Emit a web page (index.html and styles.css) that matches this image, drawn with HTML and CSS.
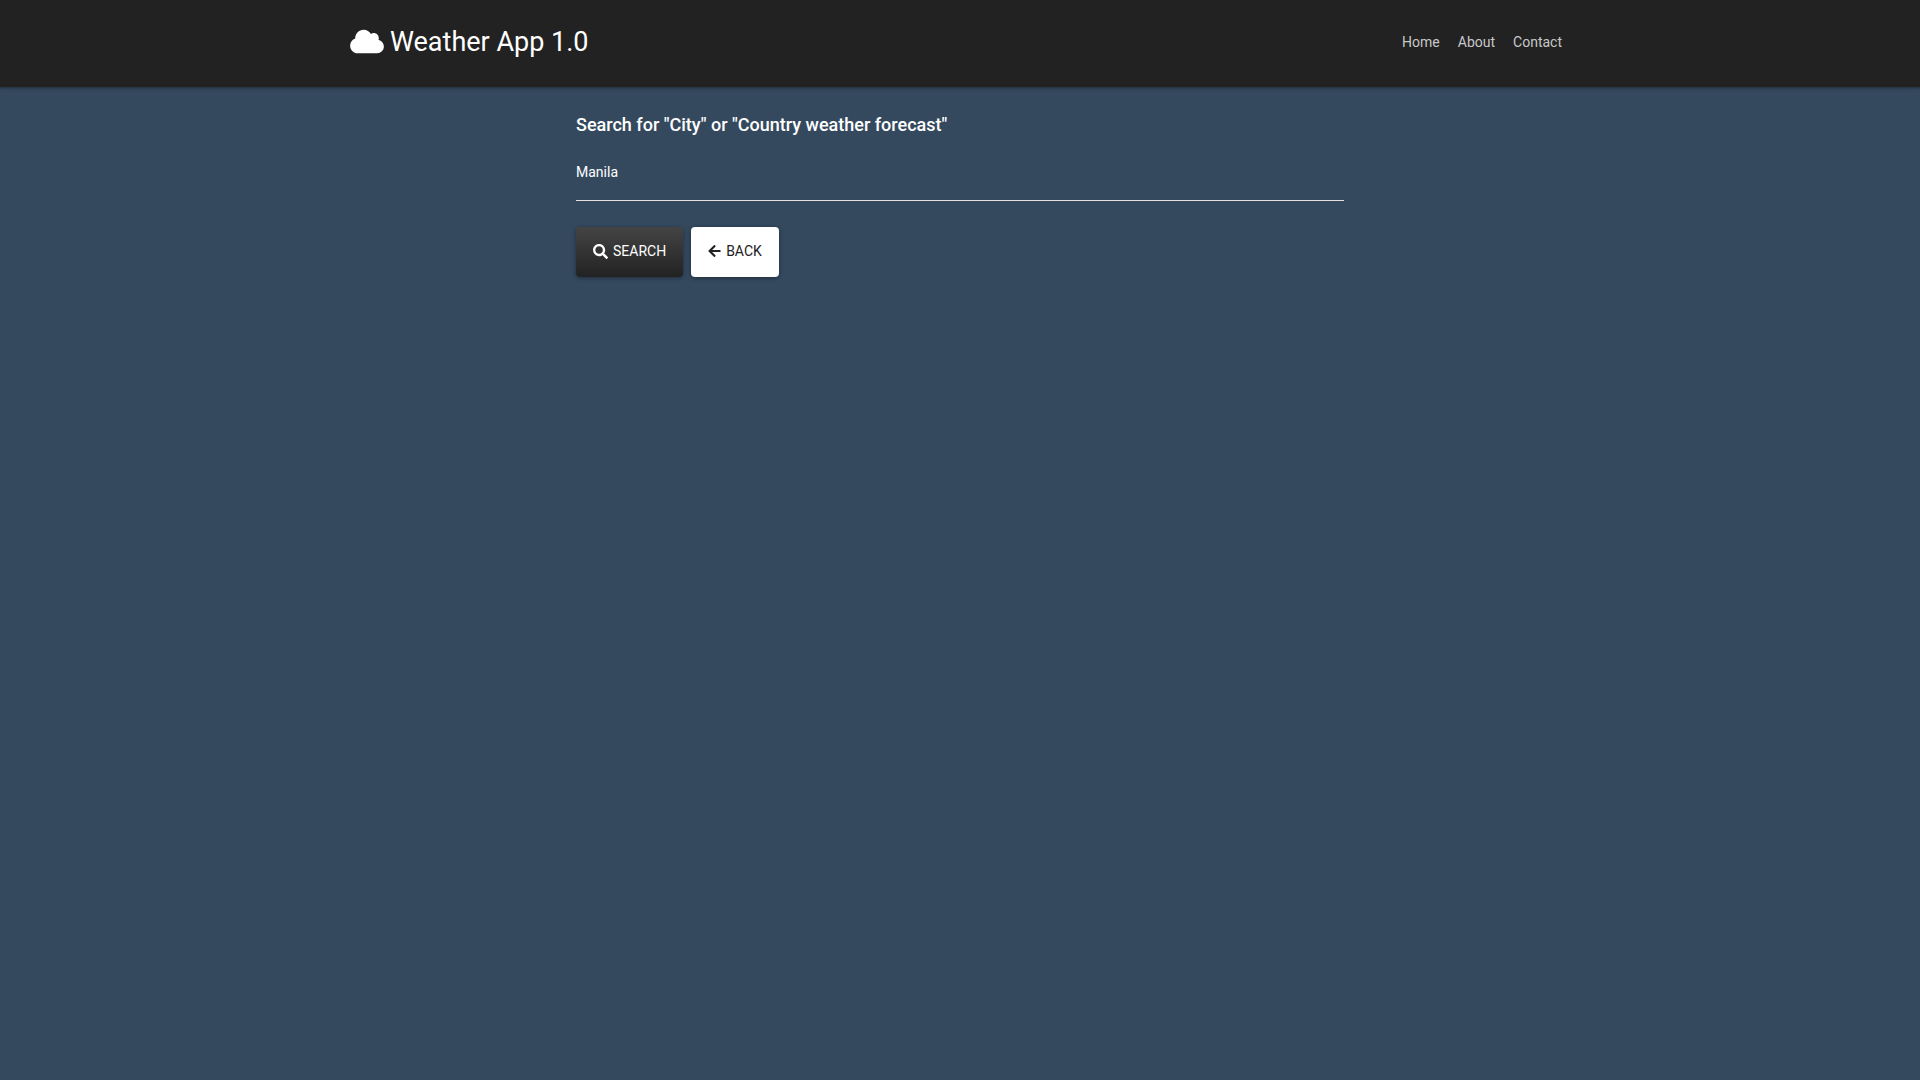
FILE: index.html
```html
<!DOCTYPE html>
<html lang="en">
<head>
<meta charset="utf-8">
<meta name="viewport" content="width=device-width, initial-scale=1">
<title>Weather App 1.0</title>
<link rel="stylesheet" href="styles.css">
</head>
<body>
<header class="navbar">
  <div class="navbar-inner">
    <a class="brand" href="#">
      <svg class="icon-cloud" viewBox="0 0 640 512" aria-hidden="true"><path d="M537.6 226.6c4.1-10.7 6.4-22.4 6.4-34.6 0-53-43-96-96-96-19.7 0-38.1 6-53.3 16.2C367 64.2 315.3 32 256 32c-88.4 0-160 71.6-160 160 0 2.7.1 5.4.2 8.1C40.2 219.8 0 273.2 0 336c0 79.5 64.5 144 144 144h368c70.7 0 128-57.3 128-128 0-61.9-44-113.6-102.4-125.4z"/></svg>
      <span>Weather App 1.0</span>
    </a>
    <nav class="nav">
      <a class="nav-link" href="#">Home</a>
      <a class="nav-link" href="#">About</a>
      <a class="nav-link" href="#">Contact</a>
    </nav>
  </div>
</header>
<main class="content">
  <form class="search-form">
    <label class="search-label" for="city">Search for "City" or "Country weather forecast"</label>
    <input class="search-input" id="city" type="text" value="Manila">
    <div class="actions">
      <button class="btn btn-dark" type="button">
        <svg class="icon-search" viewBox="0 0 512 512" aria-hidden="true"><path d="M505 442.7L405.3 343c-4.5-4.5-10.6-7-17-7H372c27.6-35.3 44-79.7 44-128C416 93.1 322.9 0 208 0S0 93.1 0 208s93.1 208 208 208c48.3 0 92.7-16.4 128-44v16.3c0 6.4 2.5 12.5 7 17l99.7 99.7c9.4 9.4 24.6 9.4 33.9 0l28.3-28.3c9.4-9.4 9.4-24.6.1-34zM208 336c-70.7 0-128-57.2-128-128 0-70.7 57.2-128 128-128 70.7 0 128 57.2 128 128 0 70.7-57.2 128-128 128z"/></svg>
        <span>SEARCH</span>
      </button>
      <button class="btn btn-light" type="button">
        <svg class="icon-back" viewBox="0 0 448 512" aria-hidden="true"><path d="M257.5 445.1l-22.2 22.2c-9.4 9.4-24.6 9.4-33.9 0L7 273c-9.4-9.4-9.4-24.6 0-33.9L201.4 44.7c9.4-9.4 24.6-9.4 33.9 0l22.2 22.2c9.5 9.5 9.3 25-.4 34.3L136.6 216H424c13.3 0 24 10.7 24 24v32c0 13.3-10.7 24-24 24H136.6l120.5 114.8c9.8 9.3 10 24.8.4 34.3z"/></svg>
        <span>BACK</span>
      </button>
    </div>
  </form>
</main>
</body>
</html>
```
FILE: styles.css
```css
* {
  box-sizing: border-box;
}

body {
  margin: 0;
  min-height: 100vh;
  background: #34495e;
  color: #fff;
  font-family: Roboto, "Liberation Sans", sans-serif;
  font-size: 14px;
  line-height: 20px;
}

svg {
  display: block;
  fill: currentColor;
}

.navbar {
  padding: 16px 24px;
  background: #222;
  box-shadow: 0 1px 3px rgba(0, 0, 0, 0.4);
}

.navbar-inner {
  display: flex;
  align-items: center;
  justify-content: space-between;
  max-width: 1220px;
  min-height: 55px;
  margin: 0 auto;
  padding-bottom: 3px;
}

.brand {
  display: flex;
  align-items: center;
  gap: 6px;
  color: #fff;
  font-size: 27px;
  line-height: 36px;
  text-decoration: none;
}

.icon-cloud {
  width: 34px;
  height: 27px;
  margin-bottom: 2px;
}

.nav {
  display: flex;
  gap: 18px;
  padding: 8px;
}

.nav-link {
  color: #c8c8c8;
  text-decoration: none;
}

.content {
  padding: 24px;
}

.search-form {
  max-width: 768px;
  margin: 0 auto;
}

.search-label {
  display: block;
  font-size: 18px;
  font-weight: 500;
  line-height: 28px;
}

.search-input {
  display: block;
  width: 100%;
  height: 58px;
  margin-top: 4px;
  padding: 0;
  border: 0;
  border-bottom: 1px solid #e5e0dc;
  outline: 0;
  background: transparent;
  color: #fff;
  font: inherit;
}

.actions {
  display: flex;
  gap: 8px;
  margin-top: 26px;
}

.btn {
  display: flex;
  align-items: center;
  gap: 5px;
  height: 50px;
  padding: 0 17px 2px;
  border: 0;
  border-radius: 4px;
  box-shadow: 0 1px 4px rgba(0, 0, 0, 0.4);
  font: inherit;
  cursor: pointer;
}

.btn-dark {
  background: linear-gradient(#444, #222);
  color: #fff;
}

.btn-light {
  background: #fff;
  color: #222;
}

.icon-search {
  width: 15px;
  height: 15px;
}

.icon-back {
  width: 13px;
  height: 14px;
}
```
